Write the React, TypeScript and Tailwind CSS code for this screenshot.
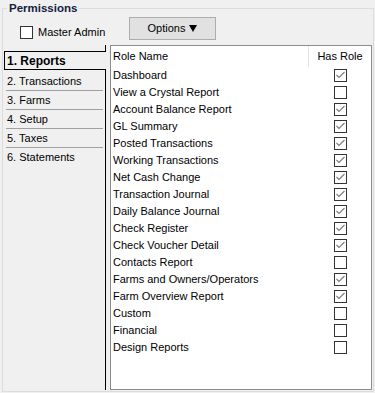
import React from 'react';

const tabs = ['1. Reports', '2. Transactions', '3. Farms', '4. Setup', '5. Taxes', '6. Statements'];

const roles: { name: string; has: boolean }[] = [
  { name: 'Dashboard', has: true },
  { name: 'View a Crystal Report', has: false },
  { name: 'Account Balance Report', has: true },
  { name: 'GL Summary', has: true },
  { name: 'Posted Transactions', has: true },
  { name: 'Working Transactions', has: true },
  { name: 'Net Cash Change', has: true },
  { name: 'Transaction Journal', has: true },
  { name: 'Daily Balance Journal', has: true },
  { name: 'Check Register', has: true },
  { name: 'Check Voucher Detail', has: true },
  { name: 'Contacts Report', has: false },
  { name: 'Farms and Owners/Operators', has: true },
  { name: 'Farm Overview Report', has: true },
  { name: 'Custom', has: false },
  { name: 'Financial', has: false },
  { name: 'Design Reports', has: false },
];

const CheckBox: React.FC<{ checked: boolean }> = ({ checked }) => (
  <div className="w-[13px] h-[13px] border border-[#333333] bg-white flex items-center justify-center shrink-0">
    {checked && (
      <svg width="11" height="11" viewBox="0 0 11 11">
        <polyline points="1.5,5 4,7.5 9.5,2" fill="none" stroke="#7a7a7a" strokeWidth="1.1" />
      </svg>
    )}
  </div>
);

export default function App() {
  return (
    <div
      className="w-[375px] h-[393px] bg-[#f0f0f0] overflow-hidden text-black pt-[8px] pl-[2px]"
      style={{ fontFamily: '"Liberation Sans", Arial, sans-serif' }}
    >
      <div className="relative w-[372px] h-[384px] border border-[#dcdcdc]">
        <div className="absolute left-[4px] -top-[8px] px-[2px] bg-[#f0f0f0] text-[11.5px] font-bold leading-[14px] text-[#14213d]">
          Permissions
        </div>

        <div className="flex pt-[8px] pl-[17px]">
          <div className="w-[109px] mt-[8px] flex items-center gap-[5px]">
            <CheckBox checked={false} />
            <span className="text-[11px] leading-[13px]">Master Admin</span>
          </div>
          <button className="w-[87px] h-[23px] bg-[#e1e1e1] border border-[#adadad] flex items-center justify-center gap-[4px] text-[11px]">
            <span>Options</span>
            <svg width="8" height="7" viewBox="0 0 8 7">
              <polygon points="0,0 8,0 4,7" fill="#000" />
            </svg>
          </button>
        </div>

        <div className="flex mt-[5px] h-[345px]">
          <div className="ml-[1px] w-[102px] flex flex-col">
            <div className="h-[6px] border-r border-black" />
            <div className="h-[19px] border border-r-0 border-black pl-[2px] flex items-center text-[12px] font-bold">
              {tabs[0]}
            </div>
            <div className="flex-1 border-r border-black pt-[2px]">
              {tabs.slice(1).map((t, i) => (
                <div
                  key={t}
                  className={`mx-[2px] h-[19px] pl-[1px] flex items-center text-[11px] ${
                    i < tabs.length - 2 ? 'border-b border-[#a0a0a0]' : ''
                  }`}
                >
                  {t}
                </div>
              ))}
            </div>
          </div>

          <div className="ml-[4px] w-[262px] h-[345px] border border-[#8c8c8c] bg-white text-[11px]">
            <div className="flex h-[21px]">
              <div className="w-[198px] pl-[2px] flex items-center border-r border-[#e5e5e5]">Role Name</div>
              <div className="flex-1 flex items-center justify-center">Has Role</div>
            </div>
            {roles.map((r) => (
              <div key={r.name} className="flex h-[17px]">
                <div className="w-[198px] pl-[2px] flex items-center whitespace-nowrap">{r.name}</div>
                <div className="flex-1 flex items-center justify-center">
                  <CheckBox checked={r.has} />
                </div>
              </div>
            ))}
          </div>
        </div>
      </div>
    </div>
  );
}
